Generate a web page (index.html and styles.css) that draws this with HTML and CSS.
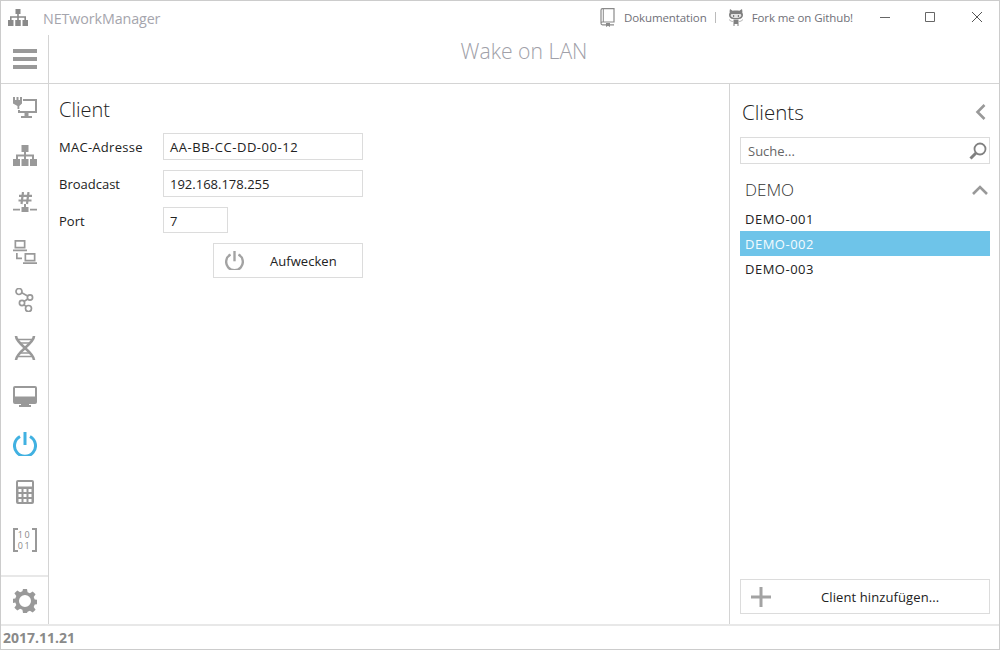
FILE: index.html
```html
<!DOCTYPE html>
<html lang="en">
<head>
    <meta charset="UTF-8">
    <title>NETworkManager</title>
    <link rel="stylesheet" href="styles.css">
</head>
<body>
<div class="window">
    <div class="titlebar">
        <svg class="app-icon" viewBox="0 0 20 18"><path d="M7.500 0h5v5h-5zM9.200 5h1.600v3H9.200zM2 7.200h16v4h-1.600V8.800h-5.600v2.400H9.200V8.800H3.600v2.400H2zM0 11h5.500v6H0zM7.250 11h5.500v6h-5.500zM14.500 11H20v6h-5.500z"/></svg>
        <span class="app-name">NETworkManager</span>
        <div class="links">
            <svg class="book-icon line" viewBox="0 0 15 19"><path stroke="#8a8a8a" stroke-width="1.200" d="M1 15V2.200C1 1.300 1.600.6 2.500.6H14v13.400H2.500C1.600 14 1 14.400 1 15.300s.6 1.500 1.500 1.500H14"/><path d="M2.800 1h1v13h-1zM6 15h4v4l-2-1.300L6 19z" fill="#8a8a8a"/></svg>
            <span class="link">Dokumentation</span>
            <span class="sep"></span>
            <svg class="cat-icon" viewBox="0 0 16 17"><path fill="#808080" d="M2 0l2.600 1.800C5.500 1.500 6.700 1.400 8 1.400s2.500.1 3.400.4L14 0c.4 1.300.5 2.600.3 3.700.5.700.7 1.500.7 2.300 0 2.300-1.500 3.800-4 4.100H5c-2.500-.3-4-1.800-4-4.100 0-.8.2-1.600.7-2.300C1.500 2.600 1.600 1.300 2 0z"/><path fill="#e4e4e4" d="M4 5h8c.8 0 1.300.6 1.300 1.500S12 9 8 9 2.700 7.400 2.700 6.500 3.200 5 4 5z"/><path fill="#808080" d="M5 6h1.200v2H5zM9.800 6H11v2H9.800zM5.500 10.500h5V17H9.500v-2h-3v2h-1z"/><path fill="none" stroke="#b5b5b5" d="M5.500 12.500C3.500 12.500 2.500 12 1 10.500M10.500 12.500c2 0 3-.5 4.500-2"/></svg>
            <span class="link fork">Fork me on Github!</span>
        </div>
        <div class="win-buttons">
            <svg class="line" viewBox="0 0 10 10"><path d="M0 5.500h10" stroke="#666"/></svg>
            <svg class="line" viewBox="0 0 10 10"><path d="M.5.500h9v9h-9z" stroke="#666"/></svg>
            <svg class="line close" viewBox="0 0 10 10"><path d="M0 0l10 10M10 0L0 10" stroke="#555"/></svg>
        </div>
    </div>

    <div class="middle">
        <div class="sidebar">
            <div class="menu-cell">
                <svg width="24" height="20" viewBox="0 0 24 20"><path d="M0 0h24v4H0zM0 8h24v4H0zM0 16h24v4H0z"/></svg>
            </div>
            <div class="nav">
                <div class="nav-item"><svg width="24" height="22" viewBox="0 0 24 22"><path d="M0 0h2v3h1.500V0h2v3H7V0h2v6.500L6.300 9v3H4.500V9L0 6.500z"/><path d="M7 2h17v14H15.500v3H19v2H8v-2h3.500v-3H5v-3h2v1h15V4H10V2z"/></svg></div>
                <div class="nav-item"><svg width="24" height="22" viewBox="0 0 24 22"><path d="M8.500 0h7v7h-7zM11 7h2v3h-2zM3 9.500h18V14h-2v-2.500h-6V14h-2v-2.500H5V14H3zM0 14h7v7H0zM8.500 14h7v7h-7zM17 14h7v7h-7z"/></svg></div>
                <div class="nav-item"><svg class="line" width="24" height="24" viewBox="0 0 24 24" stroke="#999" stroke-width="2.200"><path d="M10 0L8.500 12M15.500 0L14 12M6 3.800h13M5.500 8.500h13"/><path stroke="none" fill="#999" d="M11 12h2v3h2.500v5h-7v-5H11zM0 16.700h7v1.800H0zM17 16.700h7v1.800h-7z"/></svg></div>
                <div class="nav-item"><svg width="24" height="24" viewBox="0 0 24 24"><path d="M1.500 0h11v8.500h-11zM3.200 1.700v5.100h7.600V1.700zM0 9.500h14v1.800H0zM11.500 13h11v8.500h-11zM13.200 14.700v5.100h7.600v-5.100zM10 22.200h14V24H10zM3 13h1.700v4.500H9v1.700H3z" fill-rule="evenodd"/></svg></div>
                <div class="nav-item"><svg class="line" width="20" height="24" viewBox="0 0 20 24" stroke="#999" stroke-width="1.700"><circle cx="4" cy="3.500" r="3"/><circle cx="15" cy="9.500" r="2.600"/><circle cx="7" cy="15" r="2.600"/><circle cx="13.500" cy="20.500" r="3"/><path d="M6.800 4.800l5.800 3.200M12.800 11L9 13.500M9 16.800l2.300 1.900"/></svg></div>
                <div class="nav-item"><svg class="line" width="22" height="24" viewBox="0 0 22 24" stroke="#999" stroke-width="2.600"><path d="M2 0c0 8 18 16 18 24M20 0C20 8 2 16 2 24"/><path stroke-width="1.600" d="M4 3.500h14M6.500 7h9M6.500 17h9M4 20.500h14"/></svg></div>
                <div class="nav-item"><svg width="24" height="21" viewBox="0 0 24 21"><path d="M2 0h20a2 2 0 0 1 2 2v14a2 2 0 0 1-2 2h-6v1h2v2H6v-2h2v-1H2a2 2 0 0 1-2-2V2a2 2 0 0 1 2-2zM2 2v8.500h20V2z" fill-rule="evenodd"/></svg></div>
                <div class="nav-item active"><svg class="line" width="24" height="24" viewBox="0 0 24 24" stroke="#41b1e1" stroke-width="3"><path d="M12 0v13"/><path d="M7 4.500a10.500 10.500 0 1 0 10 0"/></svg></div>
                <div class="nav-item"><svg width="18" height="24" viewBox="0 0 18 24"><path d="M2 0h14a2 2 0 0 1 2 2v20a2 2 0 0 1-2 2H2a2 2 0 0 1-2-2V2a2 2 0 0 1 2-2zM2 2v4.500h14V2zM2.500 9v3h3V9zM7.500 9v3h3V9zM12.500 9v3h3V9zM2.500 14v3h3v-3zM7.500 14v3h3v-3zM12.500 14v3h3v-3zM2.500 19v3h3v-3zM7.500 19v3h3v-3zM12.500 19v3h3v-3z" fill-rule="evenodd"/></svg></div>
                <div class="nav-item">
                    <span class="bracket left"></span>
                    <span class="bits">10<br>01</span>
                    <span class="bracket right"></span>
                </div>
            </div>
            <div class="settings-cell">
                <svg width="24" height="24" viewBox="0 0 24 24"><path fill-rule="evenodd" d="M10 0h4l.6 3.300 2.300 1 2.800-1.900 2.900 2.900-1.900 2.800 1 2.300 3.300.6v4l-3.300.6-1 2.300 1.900 2.800-2.900 2.900-2.800-1.900-2.300 1L14 24h-4l-.6-3.300-2.300-1-2.800 1.900-2.900-2.900 1.900-2.800-1-2.300L-1 14v-4l3.300-.6 1-2.300-1.900-2.800 2.900-2.900 2.800 1.900 2.300-1zM12 6a6 6 0 1 0 0 12 6 6 0 0 0 0-12z"/></svg>
            </div>
        </div>

        <div class="main">
            <div class="page-title">Wake on LAN</div>
            <div class="panes">
                <div class="client">
                    <h2 class="client-title">Client</h2>
                    <div class="form-row">
                        <label class="mac-label">MAC-Adresse</label>
                        <div class="field wide mac">AA-BB-CC-DD-00-12</div>
                    </div>
                    <div class="form-row">
                        <label>Broadcast</label>
                        <div class="field wide">192.168.178.255</div>
                    </div>
                    <div class="form-row">
                        <label>Port</label>
                        <div class="field short">7</div>
                    </div>
                    <div class="wake-btn">
                        <svg class="line" width="19" height="19" viewBox="0 0 24 24" stroke="#a3a3a3" stroke-width="3"><path d="M12 0v13"/><path d="M7 4.500a10.500 10.500 0 1 0 10 0"/></svg>
                        <span>Aufwecken</span>
                    </div>
                </div>

                <div class="clients">
                    <div class="clients-head">
                        <span class="clients-title">Clients</span>
                        <svg class="line" width="11" height="16" viewBox="0 0 11 16" stroke="#999" stroke-width="2.600"><path d="M9.500 1L2.500 8l7 7"/></svg>
                    </div>
                    <div class="search">
                        <span>Suche...</span>
                        <svg class="line" width="18" height="18" viewBox="0 0 18 18" stroke="#808080"><circle cx="11" cy="7" r="5.500" stroke-width="1.800"/><path d="M7 11l-5.500 5.500" stroke-width="3"/></svg>
                    </div>
                    <div class="group-head">
                        <span class="group-name">DEMO</span>
                        <svg class="line" width="16" height="10" viewBox="0 0 16 10" stroke="#999" stroke-width="2.600"><path d="M1 9l7-7 7 7"/></svg>
                    </div>
                    <div class="client-item">DEMO-001</div>
                    <div class="client-item selected">DEMO-002</div>
                    <div class="client-item">DEMO-003</div>
                    <div class="add-btn">
                        <svg width="20" height="20" viewBox="0 0 20 20"><path d="M8.500 0h3v20h-3zM0 8.500h20v3H0z" fill="#a3a3a3"/></svg>
                        <span>Client hinzufügen...</span>
                    </div>
                </div>
            </div>
        </div>
    </div>

    <div class="statusbar">2017.11.21</div>
</div>
</body>
</html>
```

FILE: styles.css
```css
*{margin: 0;padding: 0;box-sizing: border-box;}
html,body{height: 100%;}
body{background: #fff;color: #222;font-size: 13px;font-family: "Open Sans","Noto Sans",sans-serif;overflow: hidden;}
svg{display: block;flex: none;fill: #999;}
svg.line{fill: none;}

.window{width: 1000px;height: 650px;border: 1px solid #ccc;display: flex;flex-direction: column;}

.titlebar{height: 34px;display: flex;align-items: center;flex: none;}
.app-icon{width: 20px;height: 18px;margin-left: 7px;fill: #8a8a8a;}
.app-name{margin-left: 15px;font-size: 14.3px;color: #a5a5ad;letter-spacing: -.1px;}
.links{margin-left: auto;display: flex;align-items: center;margin-bottom: 2px;}
.book-icon{width: 15px;height: 19px;}
.link{font-size: 11.5px;color: #707078;margin-left: 9px;letter-spacing: -.1px;}
.link.fork{margin-left: 8px;}
.sep{width: 1px;height: 11px;background: #bbb;margin: 0 12px 0 8px;}
.cat-icon{width: 16px;height: 17px;}
.win-buttons{display: flex;align-items: center;margin-left: 27px;margin-right: 17px;gap: 35px;margin-bottom: 2px;}
.win-buttons svg{width: 10px;height: 10px;}
.win-buttons .close{margin-left: 2px;}

.middle{flex: 1;display: flex;min-height: 0;}

.sidebar{width: 48px;flex: none;display: flex;flex-direction: column;border-right: 1px solid #d4d4d4;}
.menu-cell{height: 49px;display: flex;align-items: center;justify-content: center;border-bottom: 1px solid #d4d4d4;margin-right: -1px;flex: none;}
.nav{flex: 1;}
.nav-item{height: 48px;display: flex;align-items: center;justify-content: center;}
.settings-cell{height: 49px;display: flex;align-items: center;justify-content: center;border-top: 2px solid #e8e8e8;flex: none;}

.bracket{width: 5px;height: 24px;border: 2px solid #999;}
.bracket.left{border-right: 0;}
.bracket.right{border-left: 0;}
.bits{width: 14px;font-size: 9px;letter-spacing: 1.500px;line-height: 11px;color: #888;text-align: center;white-space: nowrap;}

.main{flex: 1;display: flex;flex-direction: column;min-width: 0;}
.page-title{height: 49px;flex: none;border-bottom: 1px solid #d4d4d4;display: flex;align-items: center;justify-content: center;font-size: 21.200px;font-weight: 300;color: #a0a0a8;padding-bottom: 17px;}
.panes{flex: 1;display: flex;min-height: 0;}

.client{flex: 1;padding: 13px 10px 0;display: flex;flex-direction: column;}
.client-title{font-size: 20px;font-weight: 300;color: #222;line-height: 26px;margin-bottom: 10px;}
.form-row{display: flex;height: 27px;margin-bottom: 10px;}
.form-row label{width: 104px;line-height: 29px;}
.form-row .mac-label{letter-spacing: .27px;}
.field{height: 27px;border: 1px solid #dcdcdc;padding-left: 6px;line-height: 26px;}
.field.wide{width: 200px;}
.field.mac{letter-spacing: .53px;}
.field.short{width: 65px;height: 26px;}
.wake-btn{width: 150px;height: 35px;margin: -1px 0 0 154px;border: 1px solid #dcdcdc;display: flex;align-items: center;padding-left: 11px;}
.wake-btn span{margin-left: 26px;letter-spacing: .05px;}

.clients{width: 270px;flex: none;border-left: 1px solid #d4d4d4;padding: 0 9px 10px 10px;display: flex;flex-direction: column;}
.clients-head{height: 53px;display: flex;align-items: center;justify-content: space-between;padding: 3px 4px 0 2px;}
.clients-title{font-size: 20.500px;font-weight: 300;}
.search{height: 27px;border: 1px solid #dcdcdc;display: flex;align-items: center;justify-content: space-between;padding: 0 2px 0 7px;color: #666;}
.group-head{height: 42px;display: flex;align-items: center;justify-content: space-between;padding: 9px 2px 0 5px;}
.group-name{font-size: 17px;font-weight: 300;color: #333;}
.client-item{height: 25px;line-height: 27px;padding-left: 5px;letter-spacing: .5px;}
.client-item.selected{background: #6ec4e9;color: #f4fbfe;}
.add-btn{height: 35px;margin-top: auto;border: 1px solid #dcdcdc;display: flex;align-items: center;padding-left: 10px;}
.add-btn span{margin-left: 50px;letter-spacing: .1px;}

.statusbar{height: 25px;flex: none;border-top: 2px solid #e8e8e8;font-size: 14px;font-weight: 700;color: #8a8a8a;padding-left: 2px;line-height: 23px;}
```
